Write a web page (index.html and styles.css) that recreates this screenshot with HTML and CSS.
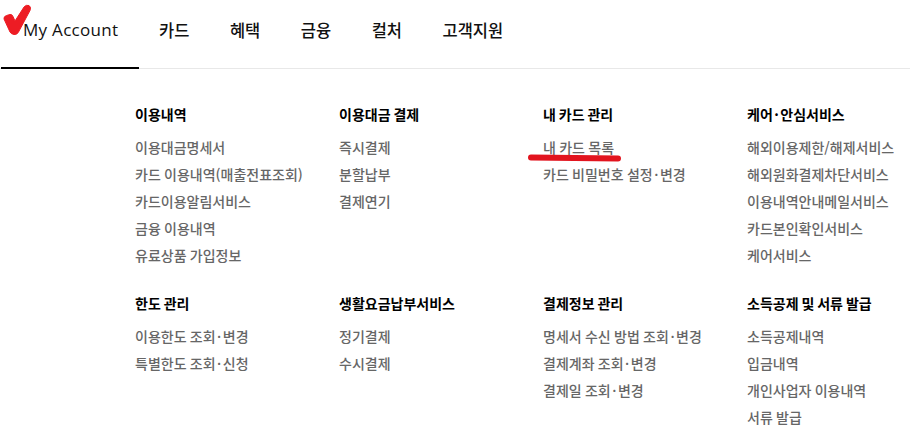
FILE: index.html
```html
<!DOCTYPE html>
<html lang="ko">
<head>
<meta charset="utf-8">
<title>My Account</title>
<link rel="stylesheet" href="styles.css">
</head>
<body>
<header class="nav">
  <svg class="logo" width="34" height="36" viewBox="0 0 34 36"><path class="logo-mark" d="M4 19 Q3.500 16.500 6.500 15.500 L10 14.500 Q12 14 13 16.500 L15 21 L24 7 Q26 4.500 29 5.500 Q31.500 7 30 10.500 L18.500 32 Q17 35 14 34.500 Q11 34 10 32 Z"/></svg>
  <a class="nav-item nav-active">My Account</a>
  <a class="nav-item">카드</a>
  <a class="nav-item">혜택</a>
  <a class="nav-item">금융</a>
  <a class="nav-item">컬처</a>
  <a class="nav-item">고객지원</a>
</header>
<main class="menu">
  <section class="group">
    <h3>이용내역</h3>
    <ul><li>이용대금명세서</li><li>카드 이용내역(매출전표조회)</li><li>카드이용알림서비스</li><li>금융 이용내역</li><li>유료상품 가입정보</li></ul>
  </section>
  <section class="group">
    <h3>이용대금 결제</h3>
    <ul><li>즉시결제</li><li>분할납부</li><li>결제연기</li></ul>
  </section>
  <section class="group">
    <h3>내 카드 관리</h3>
    <ul><li class="marked">내 카드 목록</li><li>카드 비밀번호 설정<span class="dot">·</span>변경</li></ul>
  </section>
  <section class="group">
    <h3>케어<span class="dot">·</span>안심서비스</h3>
    <ul><li>해외이용제한/해제서비스</li><li>해외원화결제차단서비스</li><li>이용내역안내메일서비스</li><li>카드본인확인서비스</li><li>케어서비스</li></ul>
  </section>
  <section class="group">
    <h3>한도 관리</h3>
    <ul><li>이용한도 조회<span class="dot">·</span>변경</li><li>특별한도 조회<span class="dot">·</span>신청</li></ul>
  </section>
  <section class="group">
    <h3>생활요금납부서비스</h3>
    <ul><li>정기결제</li><li>수시결제</li></ul>
  </section>
  <section class="group">
    <h3>결제정보 관리</h3>
    <ul><li>명세서 수신 방법 조회<span class="dot">·</span>변경</li><li>결제계좌 조회<span class="dot">·</span>변경</li><li>결제일 조회<span class="dot">·</span>변경</li></ul>
  </section>
  <section class="group">
    <h3>소득공제 및 서류 발급</h3>
    <ul><li>소득공제내역</li><li>입금내역</li><li>개인사업자 이용내역</li><li>서류 발급</li></ul>
  </section>
</main>
</body>
</html>
```
FILE: styles.css
```css
* { box-sizing: border-box; }
html, body { margin: 0; height: 448px; overflow: hidden; background: #fff; }
body { font-family: "Noto Sans CJK KR", "Noto Sans", sans-serif; color: #000; }
.nav { display: flex; height: 69px; border-bottom: 1px solid #e8e8e8; padding-left: 1px; position: relative; }
.logo { position: absolute; left: 0; top: 0; }
.logo-mark { fill: #ed1c24; stroke: #ed1c24; stroke-width: 1; stroke-linejoin: round; }
.nav-item { font-size: 16.5px; font-weight: 500; line-height: 60px; padding: 0 20px; height: 69px; color: #111; margin-right: 0.5px; }
.nav-active { font-family: "Open Sans", sans-serif; font-weight: 400; font-size: 17px; letter-spacing: 0.3px; width: 138px; margin-right: 0; padding: 0 0 0 22px; border-bottom: 2px solid #000; }
.menu { display: grid; grid-template-columns: repeat(4, 204px); row-gap: 23px; padding: 34px 0 0 135px; }
.group h3 { margin: 0; font-size: 14px; font-weight: 700; line-height: 22px; word-spacing: -1px; }
.group ul { list-style: none; margin: 9px 0 0; padding: 0; }
.group li { font-size: 14px; font-weight: 500; line-height: 27px; color: #666; white-space: nowrap; word-spacing: -0.6px; }
.dot { padding: 0 1.5px; }
.marked { position: relative; }
.marked::after { content: ""; position: absolute; left: -15px; top: 21px; width: 93px; height: 6px; border-radius: 3px; background: #e2141e; transform: rotate(0.6deg); }
```
